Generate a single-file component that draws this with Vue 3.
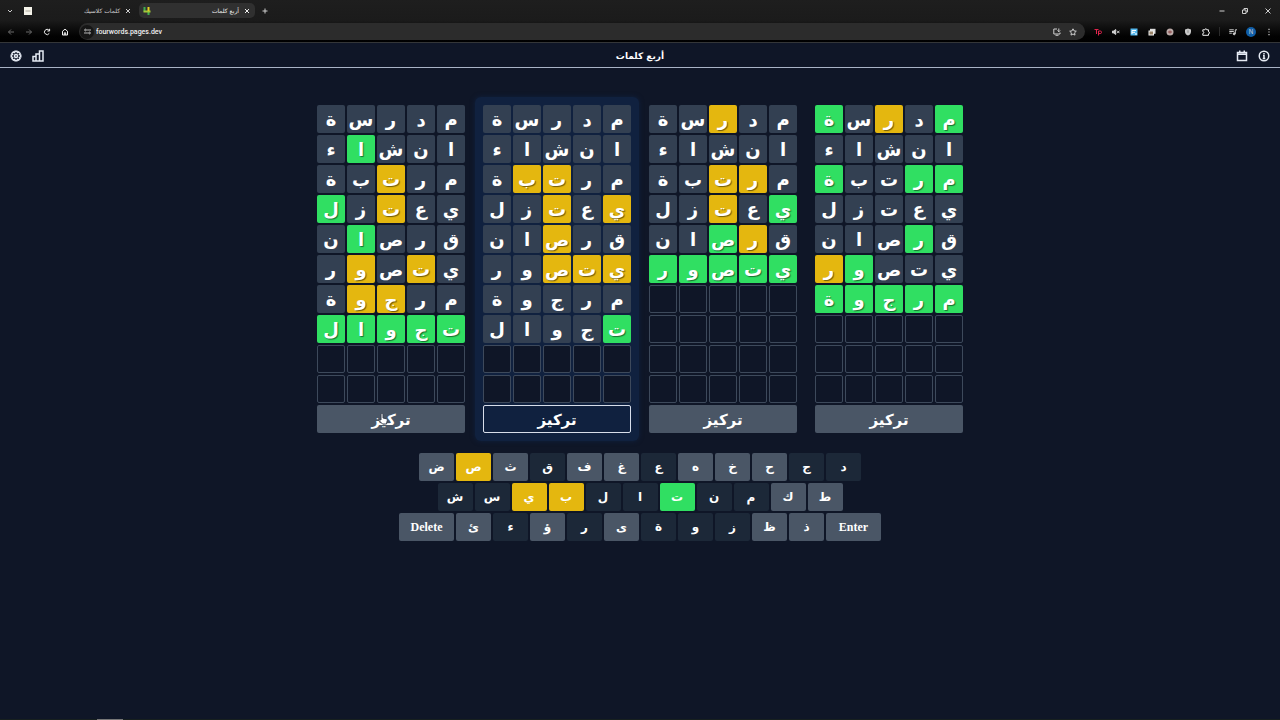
<script setup>
const words = ['مدرسة', 'انشاء', 'مرتبة', 'يعتزل', 'قرصان', 'يتصور', 'مرجوة', 'تجوال']
const ROWS = 10

// One mark per letter, first letter first: g = right place, y = wrong place, - = absent
const results = [
  ['-----', '---g-', '--y--', '--y-g', '---g-', '-y-y-', '--yy-', 'ggggg'],
  ['-----', '-----', '--yy-', 'y-y--', '--y--', 'yyy--', '-----', 'g----'],
  ['--y--', '-----', '-yy--', 'g-y--', '-yg--', 'ggggg'],
  ['g-y-g', '-----', 'gg--g', '-----', '-g---', '---gy', 'ggggg'],
]
const kinds = { g: 'correct', y: 'present', '-': 'absent' }

const boards = results.map((marks, b) => ({
  id: b,
  focused: b === 1,
  tiles: Array.from({ length: ROWS * 5 }, (_, i) => {
    const row = Math.floor(i / 5)
    const col = i % 5
    return row < marks.length
      ? { letter: words[row][col], kind: kinds[marks[row][col]] }
      : { letter: '', kind: 'empty' }
  }),
}))

const keyRow = (letters, marks) =>
  letters.split(' ').map((label, i) => ({
    label,
    kind: { g: 'correct', y: 'present', u: 'used', '-': 'fresh' }[marks[i]],
    wide: label.length > 1,
  }))

const keyboard = [
  keyRow('ض ص ث ق ف غ ع ه خ ح ج د', '-y-u--u---uu'),
  keyRow('ش س ي ب ل ا ت ن م ك ط', 'uuyyuuguu--'),
  keyRow('Delete ئ ء ؤ ر ى ة و ز ظ ذ Enter', '--u-u-uuu---'),
]
</script>

<template>
  <div class="window">
    <div class="browser">
      <div class="tabs">
        <button class="glyph menu" aria-label="Search tabs">
          <svg viewBox="0 0 8 8"><path d="M2 3l2 2 2-2" /></svg>
        </button>
        <div class="tab">
          <svg class="favicon" viewBox="0 0 8 8"><rect width="8" height="8" fill="#f5f3ea" stroke="none" /><path d="M1.500 4h5" stroke="#aaa69c" stroke-width="1" /></svg>
          <span class="tab-title" dir="rtl">كلمات كلاسيك</span>
          <button class="glyph" aria-label="Close tab"><svg viewBox="0 0 8 8"><path d="M2 2l4 4M6 2l-4 4" /></svg></button>
        </div>
        <div class="tab active">
          <svg class="favicon" viewBox="0 0 8 8"><path d="M1.500 0v4.500M5.500 4v4" stroke="#3fae4e" stroke-width="2" /><path d="M.5 4.500h7" stroke="#a5c83a" stroke-width="2" /><path d="M5.500 0v4" stroke="#e5cf22" stroke-width="2" /></svg>
          <span class="tab-title" dir="rtl">أربع كلمات</span>
          <button class="glyph" aria-label="Close tab"><svg viewBox="0 0 8 8"><path d="M2 2l4 4M6 2l-4 4" /></svg></button>
        </div>
        <button class="glyph add" aria-label="New tab"><svg viewBox="0 0 8 8"><path d="M4 1.500v5M1.500 4h5" /></svg></button>
        <div class="window-buttons">
          <button class="glyph" aria-label="Minimize"><svg viewBox="0 0 8 8"><path d="M1.500 4h5" /></svg></button>
          <button class="glyph" aria-label="Restore"><svg viewBox="0 0 8 8"><path d="M1.500 3h3.500v3.500H1.500zM3 3V1.500h3.500V5H5" /></svg></button>
          <button class="glyph" aria-label="Close"><svg viewBox="0 0 8 8"><path d="M1.500 1.500l5 5M6.500 1.500l-5 5" /></svg></button>
        </div>
      </div>

      <div class="toolbar">
        <div class="nav">
          <button class="glyph dim" aria-label="Back"><svg viewBox="0 0 8 8"><path d="M7 4H1.500M4 1.500L1.500 4 4 6.500" /></svg></button>
          <button class="glyph dim" aria-label="Forward"><svg viewBox="0 0 8 8"><path d="M1 4h5.500M4 1.500L6.500 4 4 6.500" /></svg></button>
          <button class="glyph strong" aria-label="Reload"><svg viewBox="0 0 8 8"><path d="M6.300 5.300A2.600 2.600 0 1 1 6 2.200M6.600 .8v2.200H4.400" /></svg></button>
          <button class="glyph strong" aria-label="Home"><svg viewBox="0 0 8 8"><path d="M1.500 7V3.200L4 1.200l2.500 2V7zM3.300 7V4.800h1.400V7" /></svg></button>
        </div>
        <div class="address">
          <button class="site-info" aria-label="Site information"><svg viewBox="0 0 8 8"><path d="M3.500 2.300H8M0 5.700h4.500" /><circle cx="1.700" cy="2.300" r="1" /><circle cx="6.300" cy="5.700" r="1" /></svg></button>
          <input type="text" value="fourwords.pages.dev" aria-label="Address">
          <button class="glyph" aria-label="Install"><svg viewBox="0 0 8 8"><path d="M4 1H.8v5H7V4.500M2.500 7.300h3M5.800 .5v3M4.500 2.500l1.300 1.300 1.300-1.300" /></svg></button>
          <button class="glyph" aria-label="Bookmark"><svg viewBox="0 0 8 8"><path d="M4 .8l1 2.100 2.300.3-1.700 1.600.4 2.300L4 6 2 7.100l.4-2.300L.7 3.200 3 2.900z" /></svg></button>
        </div>
        <div class="extensions">
          <button class="glyph" aria-label="TP extension"><svg viewBox="0 0 8 8" class="red"><path d="M.5 1.500h4M2.500 1.500v4.500M4.500 7.500V3h1.700a1.300 1.300 0 0 1 0 2.600H4.500" /></svg></button>
          <button class="glyph" aria-label="Mute"><svg viewBox="0 0 8 8"><path d="M.5 3h1.200l2-1.500v5L1.700 5H.5z" fill="currentColor" /><path d="M5 2.700l2.500 2.500M7.500 2.700L5 5.200" /></svg></button>
          <button class="glyph" aria-label="Blue extension"><svg viewBox="0 0 8 8"><rect x=".5" y=".5" width="7" height="7" fill="#55b9ef" stroke="none" /><path d="M2 6V2.500h4M2 4.300h3M5 6h2" stroke="#fff" /></svg></button>
          <button class="glyph" aria-label="Picture extension"><svg viewBox="0 0 8 8"><rect x="2" y=".8" width="5.500" height="5" fill="#ddd" stroke="none" /><rect x="1" y="3" width="4.500" height="4" fill="#9a8468" stroke="#eee" /></svg></button>
          <button class="glyph" aria-label="Round extension"><svg viewBox="0 0 8 8"><circle cx="4" cy="4" r="3.500" fill="#bbaaa8" stroke="none" /><path d="M2 4h4M4 2.500v3" stroke="#8c4b4b" /></svg></button>
          <button class="glyph" aria-label="Shield"><svg viewBox="0 0 8 8"><path d="M4 .6l3 .9v2.300C7 5.800 5.700 7 4 7.600 2.300 7 1 5.800 1 3.800V1.500z" fill="#c9c9c9" stroke="none" /><path d="M4 2.300v2.500" stroke="#888" /></svg></button>
          <button class="glyph strong" aria-label="Extensions"><svg viewBox="0 0 8 8"><path d="M.8 1.800h2a1 1 0 0 1 2 0h1.700v2a1 1 0 0 1 0 2v1.500H.8V5.500a1 1 0 0 0 0-2z" /></svg></button>
          <span class="divider"></span>
          <button class="glyph" aria-label="Media"><svg viewBox="0 0 8 8"><path d="M.3 1.800h4.500M.3 3.500h4.500M.3 5.200h2.500M6.300 5.800V1.800H8" /><circle cx="5.200" cy="5.800" r="1" fill="currentColor" /></svg></button>
          <button class="profile" aria-label="Profile">N</button>
          <button class="glyph" aria-label="More"><svg viewBox="0 0 8 8"><path d="M4 .8v1.200M4 3.400v1.200M4 6v1.200" stroke-width="1.200" /></svg></button>
        </div>
      </div>
    </div>

    <header class="bar">
      <div class="actions">
        <button aria-label="الإعدادات">
          <svg viewBox="0 0 24 24"><path d="M10 2.500h4l.8 2.600 2.500-1.200 2.800 2.800-1.200 2.500 2.600.8v4l-2.600.8 1.200 2.500-2.800 2.800-2.500-1.200-.8 2.600h-4l-.8-2.600-2.500 1.200-2.800-2.800 1.200-2.500-2.600-.8v-4l2.600-.8-1.200-2.500 2.800-2.800 2.500 1.200z" /><circle cx="12" cy="12" r="3" /></svg>
        </button>
        <button aria-label="الإحصائيات">
          <svg viewBox="0 0 24 24"><path d="M2 13h6v9H2zM8 8h7v14H8zM15 2h7v20h-7z" /></svg>
        </button>
      </div>
      <h1 dir="rtl">أربع كلمات</h1>
      <div class="actions end">
        <button aria-label="التقويم">
          <svg viewBox="0 0 24 24"><path d="M3 5h18v16H3zM3 8.500h18M7.500 1v5M16.500 1v5" /></svg>
        </button>
        <button aria-label="معلومات">
          <svg viewBox="0 0 24 24"><circle cx="12" cy="12" r="9.500" /><path d="M12 6v2.500M10 11h2v6.500M9.500 17h5" /></svg>
        </button>
      </div>
    </header>

    <main>
      <div class="boards">
        <section v-for="board in boards" :key="board.id" class="board" :class="{ focused: board.focused }">
          <div class="grid" dir="rtl">
            <div v-for="(tile, i) in board.tiles" :key="i" class="tile" :class="tile.kind">{{ tile.letter }}</div>
          </div>
          <button class="focus" dir="rtl">تركيز</button>
          <svg v-if="board.id === 0" class="pointer" viewBox="0 0 10 12"><path d="M3 7V1.500a1 1 0 0 1 2 0V5l3.500.8q1 .3.800 1.500L8.500 11h-4L1 7.500q.5-1.200 2-.5z" /></svg>
        </section>
      </div>

      <div class="keyboard">
        <div v-for="(row, r) in keyboard" :key="r" class="keys">
          <button v-for="key in row" :key="key.label" class="key" :class="[key.kind, { wide: key.wide }]">{{ key.label }}</button>
        </div>
      </div>
    </main>
    <footer class="taskbar"><span></span></footer>
  </div>
</template>

<style>
body {
  background: #0f1627;
}
</style>

<style scoped>
.window {
  min-height: 100vh;
  display: flex;
  flex-direction: column;
  color: #fff;
  font-family: "DejaVu Sans", sans-serif;
}
button {
  padding: 0;
  border: 0;
  background: none;
  color: inherit;
  font: inherit;
}
svg {
  display: block;
  fill: none;
  stroke: currentColor;
}
.browser {
  border-bottom: 1px solid #343638;
  background: linear-gradient(#1e1e1e 0, #1b1b1b 20px, #020202 36px, #000 42px);
  color: #cfcfcf;
}
.tabs {
  display: flex;
  align-items: center;
  height: 21px;
  padding: 0 6px;
}
.glyph svg {
  width: 8px;
  height: 8px;
  stroke-width: 1;
}
.glyph.dim {
  color: #6b6b6b;
}
.glyph.strong {
  color: #f0f0f0;
}
.tab {
  display: flex;
  align-items: center;
  box-sizing: border-box;
  width: 116px;
  height: 15px;
  margin-left: 6px;
  padding: 0 4px;
  border-radius: 5px;
  font-size: 6px;
}
.tab:not(.active) {
  margin-right: -3px;
}
.tab.active {
  background: #303030;
  color: #f0f0f0;
}
.favicon {
  width: 8px;
  height: 8px;
}
.tab-title {
  flex: 1;
  margin-right: 4px;
  line-height: 12px;
}
.add {
  margin-left: 6px;
}
.window-buttons {
  display: flex;
  gap: 15px;
  margin-left: auto;
  padding-right: 2px;
}
.toolbar {
  display: flex;
  align-items: center;
  height: 21px;
  padding: 0 7px;
}
.nav {
  display: flex;
  gap: 10px;
}
.address {
  flex: 1;
  display: flex;
  align-items: center;
  gap: 8px;
  height: 17px;
  margin: 0 9px 0 10px;
  padding: 0 8px 0 1px;
  border-radius: 9px;
  background: #2c2c2c;
}
.site-info {
  display: grid;
  place-items: center;
  width: 14px;
  height: 14px;
  margin-right: -6px;
  border-radius: 50%;
  background: #161616;
}
.site-info svg {
  width: 7px;
  height: 7px;
}
.address input {
  flex: 1;
  min-width: 0;
  padding: 0;
  border: 0;
  outline: 0;
  background: none;
  color: #f0f0f0;
  font: 500 7px/14px Roboto, sans-serif;
}
.extensions {
  display: flex;
  align-items: center;
  gap: 10px;
}
.red {
  color: #e0254d;
}
.divider {
  width: 1px;
  height: 9px;
  margin: 0 -1px;
  background: #2b2b2b;
}
.profile {
  width: 10px;
  height: 10px;
  margin: 0 -1px;
  border-radius: 50%;
  background: #0f5ea8;
  font: 6px/10px Inter, sans-serif;
}
.bar {
  display: grid;
  grid-template-columns: 1fr auto 1fr;
  align-items: center;
  height: 22px;
  padding: 2px 10px 0;
  border-bottom: 1px solid #a9b3c6;
}
.bar h1 {
  margin: 0;
  font-size: 9px;
  line-height: 20px;
}
.actions {
  display: flex;
  gap: 10px;
  color: #e5eaf3;
}
.actions.end {
  justify-content: flex-end;
}
.actions svg {
  width: 12px;
  height: 12px;
  stroke-width: 3;
}
main {
  flex: 1;
  padding: 29px 0;
}
.boards {
  display: flex;
  justify-content: center;
  gap: 2px;
}
.board {
  position: relative;
  padding: 8px;
  border-radius: 6px;
}
.board.focused {
  background: #10213f;
  box-shadow: 0 0 5px #10213f;
}
.grid {
  display: grid;
  grid-template-columns: repeat(5, 28px);
  gap: 2px;
}
.tile,
.focus {
  height: 28px;
  border-radius: 2px;
  font-size: 18px;
  font-weight: 700;
  line-height: 30px;
  text-align: center;
}
.absent {
  background: #334052;
}
.correct {
  background: #30df62;
}
.present {
  background: #e4b70f;
}
.tile.correct,
.tile.present {
  text-shadow: 1px 1px 1px rgba(0, 0, 0, 0.5);
}
.tile.empty {
  box-sizing: border-box;
  border: 1px solid #3d495b;
  background: #0f1627;
}
.focus {
  display: block;
  width: 100%;
  margin-top: 2px;
  background: #4a5666;
  font-size: 15px;
}
.focused .focus {
  border: 1px solid #d8deea;
  background: #10213f;
  line-height: 28px;
}
.pointer {
  position: absolute;
  left: 69px;
  bottom: 16px;
  width: 10px;
  height: 12px;
  fill: #fff;
  stroke: #3a4350;
  stroke-width: 1;
}
.keyboard {
  display: grid;
  gap: 2px;
  margin-top: 12px;
}
.keys {
  display: flex;
  justify-content: center;
  gap: 2px;
}
.key {
  width: 35px;
  height: 28px;
  border-radius: 2px;
  font-size: 12px;
  font-weight: 700;
  line-height: 28px;
}
.key.wide {
  width: 55px;
  font-family: "Liberation Serif", serif;
}
.used {
  background: #1c2838;
}
.fresh {
  background: #4a5666;
}
.taskbar {
  height: 1px;
  padding-left: 97px;
  background: #17201f;
}
.taskbar span {
  display: block;
  width: 26px;
  height: 1px;
  background: #777;
}
</style>
